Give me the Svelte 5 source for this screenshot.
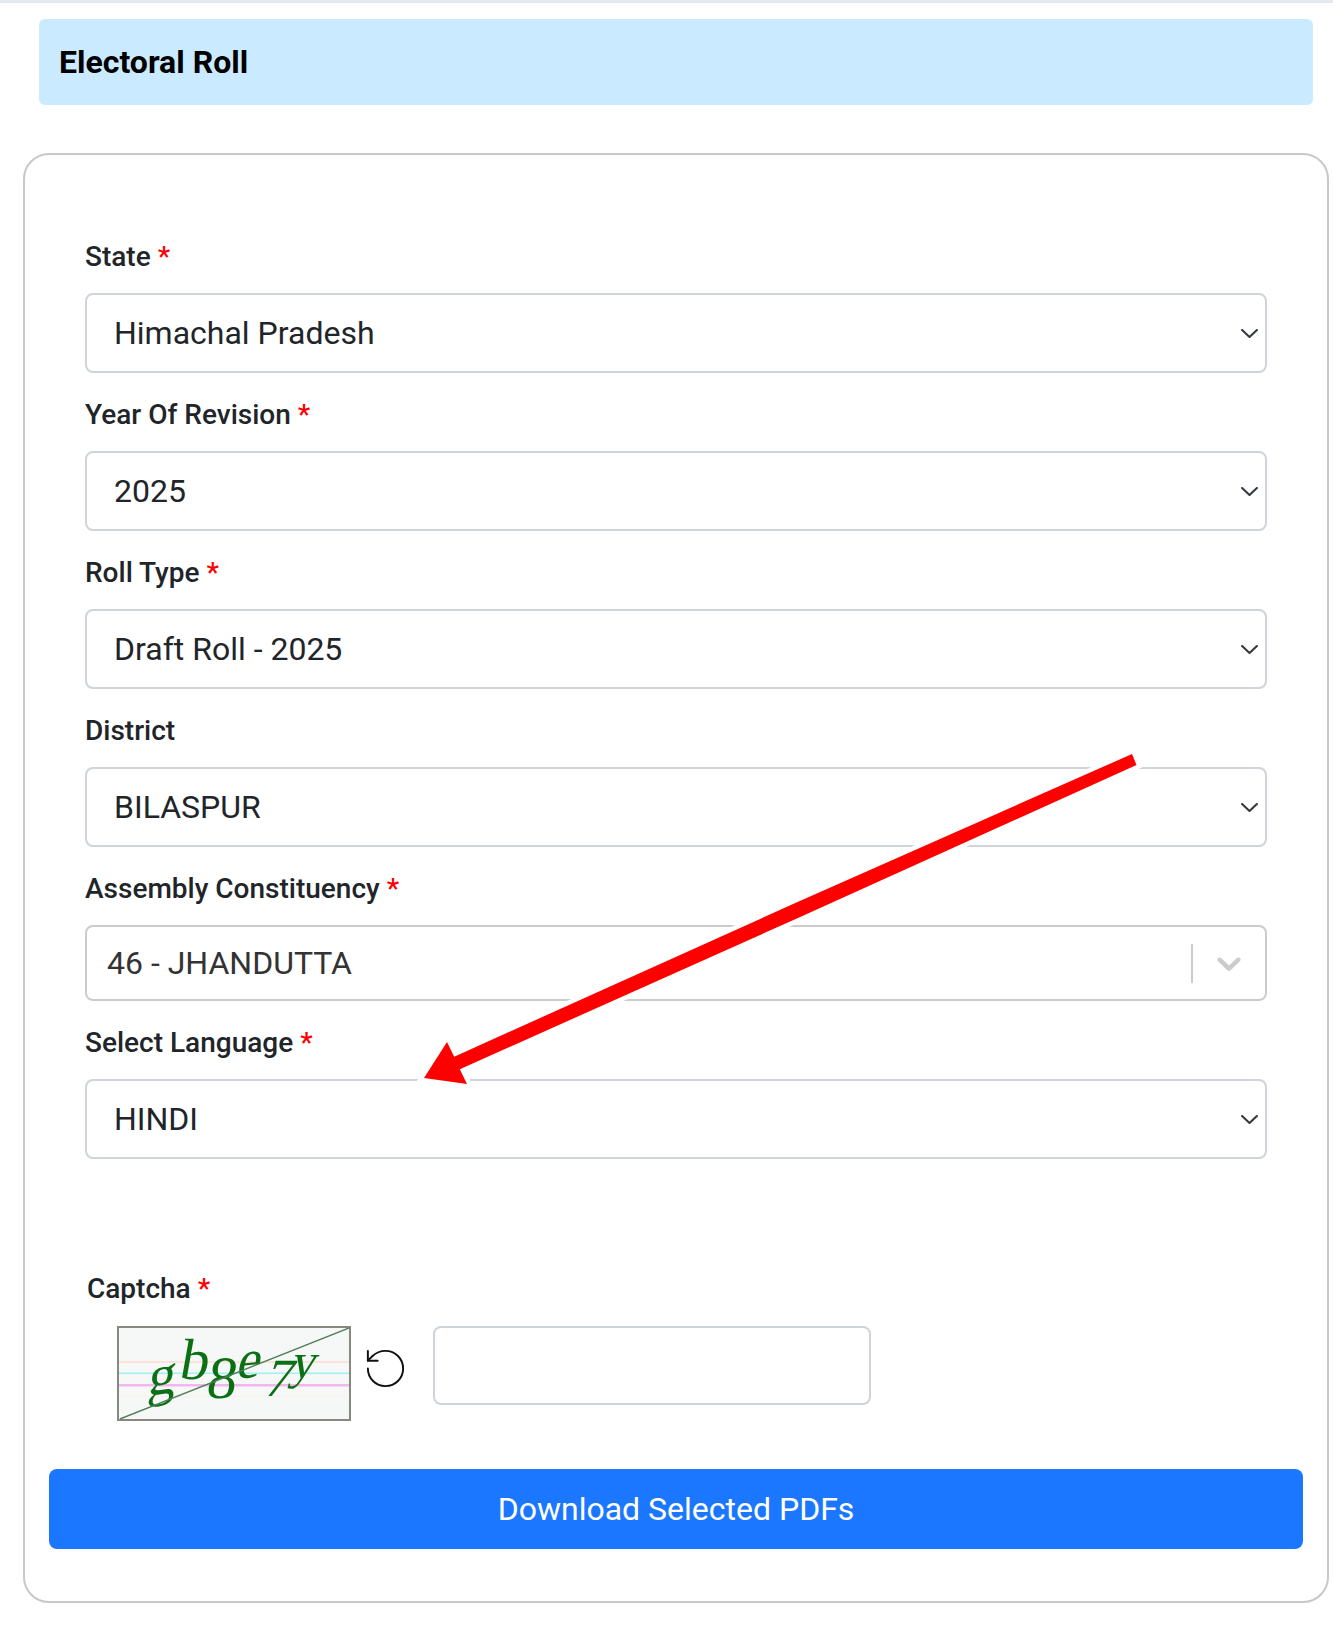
<script lang="ts">
	// Electoral roll download form
	const fields = [
		{ label: 'State', value: 'Himachal Pradesh', required: true },
		{ label: 'Year Of Revision', value: '2025', required: true },
		{ label: 'Roll Type', value: 'Draft Roll - 2025', required: true },
		{ label: 'District', value: 'BILASPUR', required: false },
		{ label: 'Assembly Constituency', value: '46 - JHANDUTTA', required: true, searchable: true },
		{ label: 'Select Language', value: 'HINDI', required: true }
	];

	const captchaChars = [
		{ c: 'g', x: 28, y: 68, size: 56, rot: -8, skew: -14 },
		{ c: 'b', x: 59, y: 51, size: 58, rot: 0, skew: -10 },
		{ c: '8', x: 86, y: 70, size: 60, rot: 0, skew: -8 },
		{ c: 'e', x: 116, y: 51, size: 54, rot: -6, skew: -18 },
		{ c: '7', x: 143, y: 68, size: 54, rot: 0, skew: -16 },
		{ c: 'y', x: 170, y: 50, size: 50, rot: 0, skew: -14 }
	];
</script>

<div class="page">
	<div class="banner">
		<h1>Electoral Roll</h1>
	</div>

	<form class="card" onsubmit={(e) => e.preventDefault()}>
		<div class="fields">
			{#each fields as field}
				<div class="field">
					<label class="field-label" for={field.label}>
						{field.label}
						{#if field.required}<span class="star">*</span>{/if}
					</label>
					{#if field.searchable}
						<div class="combo" id={field.label}>
							<span class="combo-value">{field.value}</span>
							<span class="combo-sep"></span>
							<svg class="combo-chevron" viewBox="0 0 20 20" aria-hidden="true">
								<path
									d="M4.516 7.548c0.436-0.446 1.043-0.481 1.576 0l3.908 3.747 3.908-3.747c0.533-0.481 1.141-0.446 1.574 0 0.436 0.445 0.408 1.197 0 1.615-0.406 0.418-4.695 4.502-4.695 4.502-0.217 0.223-0.502 0.335-0.787 0.335s-0.57-0.112-0.789-0.335c0 0-4.287-4.084-4.695-4.502s-0.436-1.17 0-1.615z"
								/>
							</svg>
						</div>
					{:else}
						<div class="select-wrap">
							<select class="select" id={field.label}>
								<option>{field.value}</option>
							</select>
							<svg class="select-chevron" viewBox="0 0 16 9" aria-hidden="true">
								<path d="M1 1l7 6.5L15 1" />
							</svg>
						</div>
					{/if}
				</div>
			{/each}
		</div>

		<div class="captcha">
			<div class="captcha-label">Captcha <span class="star">*</span></div>
			<div class="captcha-row">
				<svg class="captcha-img" viewBox="0 0 230 91" role="img" aria-label="captcha">
					<rect width="230" height="91" fill="#f6f8f8" />
					<rect y="33" width="230" height="2" fill="#fbe3da" />
					<rect y="44.5" width="230" height="1.5" fill="#9ff0f2" />
					<rect y="56" width="230" height="2.5" fill="#f3b6ef" />
					<rect y="68" width="230" height="1" fill="#fdf0ea" />
					{#each captchaChars as ch}
						<text
							class="captcha-char"
							font-size={ch.size}
							transform="translate({ch.x} {ch.y}) rotate({ch.rot}) skewX({ch.skew})">{ch.c}</text
						>
					{/each}
					<line x1="1" y1="91" x2="230" y2="0" stroke="#4f7d57" stroke-width="1.4" />
				</svg>
				<svg
					class="refresh"
					viewBox="0 0 24 24"
					fill="none"
					stroke="#111"
					stroke-width="1"
					stroke-linecap="round"
					stroke-linejoin="round"
					aria-hidden="true"
				>
					<path d="M3 12a9 9 0 1 0 9-9 9.75 9.75 0 0 0-6.74 2.74L3 8" />
					<path d="M3 3v5h5" />
				</svg>
				<input class="captcha-input" type="text" />
			</div>
		</div>

		<button class="download" type="submit">Download Selected PDFs</button>
	</form>

	<!-- Annotation drawn on top of the screenshot -->
	<svg class="annotation" viewBox="0 0 1333 1628" aria-hidden="true">
		<polygon
			points="1132,754 792.5,904.3 454.2,1056.7 447,1042 424,1078 467,1084 459.8,1069.3 798.5,917.7 1136.5,765"
			fill="#ff0000"
			stroke="#fff"
			stroke-width="9"
			paint-order="stroke"
		/>
	</svg>
</div>

<style>
	:global(body) {
		background: #fff;
	}

	.page {
		position: relative;
		width: 1333px;
		min-height: 1628px;
		box-sizing: border-box;
		border-top: 3px solid #e4e6f1;
		padding: 16px 0 25px;
		font-family: Roboto, 'Liberation Sans', sans-serif;
		color: #212529;
	}

	.banner {
		margin: 0 20px 0 39px;
		height: 86px;
		display: flex;
		align-items: center;
		padding: 0 20px;
		box-sizing: border-box;
		background: #caeaff;
		border-radius: 6px;
	}

	.banner h1 {
		margin: 0;
		font-size: 32px;
		font-weight: 700;
		color: #000;
	}

	.card {
		margin: 48px 4px 0 23px;
		height: 1450px;
		box-sizing: border-box;
		border: 2px solid #c8c8c8;
		border-radius: 26px;
		padding: 60px 24px 0;
	}

	.fields {
		padding: 0 36px;
	}

	.field-label {
		display: block;
		box-sizing: border-box;
		height: 78px;
		padding-top: 22px;
		line-height: 40px;
		font-size: 28px;
		font-weight: 500;
	}

	.star {
		color: #f00;
	}

	.select-wrap {
		position: relative;
	}

	.select {
		display: block;
		width: 100%;
		height: 80px;
		box-sizing: border-box;
		padding: 0 60px 0 27px;
		appearance: none;
		background: #fff;
		border: 2px solid #ced4da;
		border-radius: 8px;
		font-family: inherit;
		font-size: 32px;
		color: #212529;
	}

	.select-chevron {
		position: absolute;
		right: 9px;
		top: 36px;
		width: 17px;
		height: 9.5px;
		fill: none;
		stroke: #343a40;
		stroke-width: 2;
		stroke-linecap: round;
		stroke-linejoin: round;
	}

	.combo {
		display: flex;
		align-items: center;
		height: 76px;
		box-sizing: border-box;
		padding: 0 16px 0 20px;
		border: 2px solid #ccc;
		border-radius: 8px;
		font-size: 32px;
		color: #333;
	}

	.combo-value {
		flex: 1;
	}

	.combo-sep {
		width: 2px;
		height: 39px;
		background: #ccc;
		margin-right: 16px;
	}

	.combo-chevron {
		width: 40px;
		height: 40px;
		fill: #ccc;
	}

	.captcha {
		margin-top: 110px;
	}

	.captcha-label {
		margin-left: 38px;
		height: 57px;
		line-height: 40px;
		font-size: 28px;
		font-weight: 500;
	}

	.captcha-row {
		display: flex;
		align-items: flex-start;
		padding-left: 68px;
	}

	.captcha-img {
		width: 234px;
		height: 95px;
		box-sizing: border-box;
		border: 2px solid #888880;
		flex: none;
	}

	.captcha-char {
		font-family: 'Liberation Serif', serif;
		fill: #0b6f14;
	}

	.refresh {
		width: 47px;
		height: 47px;
		flex: none;
		margin: 19px 24px 0 11px;
	}

	.captcha-input {
		width: 438px;
		height: 79px;
		box-sizing: border-box;
		border: 2px solid #ced4da;
		border-radius: 8px;
		background: #fff;
	}

	.download {
		display: block;
		width: 100%;
		height: 80px;
		margin-top: 48px;
		border: none;
		border-radius: 8px;
		background: #1b77ff;
		color: #fff;
		font-family: inherit;
		font-size: 32px;
	}

	.annotation {
		position: absolute;
		top: -3px;
		left: 0;
		width: 1333px;
		height: 1628px;
		pointer-events: none;
	}
</style>
